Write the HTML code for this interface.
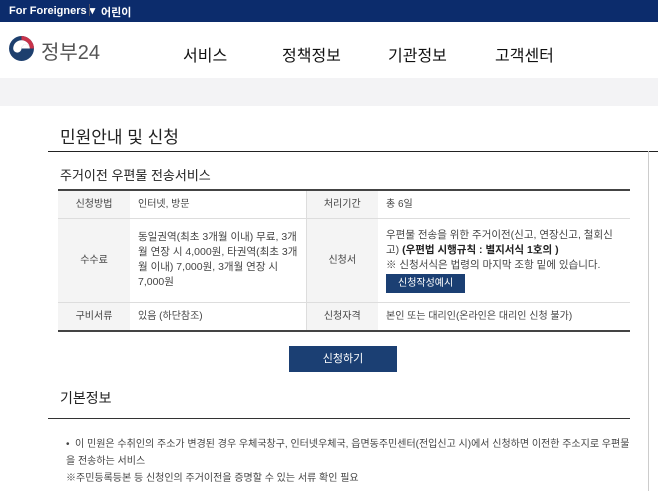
<!DOCTYPE html>
<html><head><meta charset="utf-8"><style>
*{margin:0;padding:0;box-sizing:border-box}
body{width:658px;height:491px;overflow:hidden;background:#fff;font-family:"Liberation Sans","Noto Sans CJK KR",sans-serif;color:#222;position:relative}
.a{position:absolute;white-space:nowrap}
.top{position:absolute;left:0;top:0;width:658px;height:22px;background:#0c2c6c;color:#fff;font-size:11px;font-weight:bold}
.hdr{position:absolute;left:0;top:22px;width:658px;height:56px;background:#fff;box-shadow:0 2px 3px rgba(0,0,0,.15)}
.band{position:absolute;left:0;top:78px;width:658px;height:28px;background:#f3f3f5}
.nav{font-size:16px;color:#111}
table{position:absolute;left:58px;top:189px;width:572px;table-layout:fixed;border-collapse:collapse;border-top:2px solid #444;border-bottom:2px solid #444;font-size:10px;color:#444}
td{border-bottom:1px solid #ddd;padding:3px 8px;vertical-align:middle;line-height:15px;white-space:normal}
td.l{background:#f4f4f4;text-align:center}
.btn{background:#1b3f73;color:#fff}
</style></head><body>
<div class="top"><span class="a" style="left:9px;top:4px">For Foreigners ▾</span><span class="a" style="left:89px;top:4px;width:1px;height:12px;background:#556"></span><span class="a" style="left:101px;top:4px">어린이</span></div>
<div class="hdr">
<svg class="a" style="left:8px;top:13px" width="27" height="27" viewBox="0 0 26 26">
<circle cx="13" cy="13" r="12" fill="#1d3f6e"/>
<path d="M13 1A12 12 0 0 1 25 13L21 13A8 8 0 0 0 13 5Z" fill="#c8334a"/>
<path d="M21 13A8 8 0 0 0 5 13A4 4 0 0 0 13 13A4 4 0 0 1 21 13Z" fill="#fff"/>
<path d="M21 13A4 4 0 0 0 13 13" fill="#fff"/>
</svg>
<span class="a" style="left:41px;top:14px;font-size:20px;color:#555">정부24</span>
<span class="a nav" style="left:183px;top:20px">서비스</span>
<span class="a nav" style="left:282px;top:20px">정책정보</span>
<span class="a nav" style="left:388px;top:20px">기관정보</span>
<span class="a nav" style="left:495px;top:20px">고객센터</span>
</div>
<div class="band"></div>
<div class="a" style="left:60px;top:123px;font-size:17px;color:#222">민원안내 및 신청</div>
<div class="a" style="left:48px;top:151px;width:610px;height:1px;background:#222"></div>
<div class="a" style="left:648px;top:151px;width:1px;height:340px;background:#ccc"></div>
<div class="a" style="left:60px;top:165px;font-size:13px">주거이전 우편물 전송서비스</div>
<table>
<colgroup><col style="width:72px"><col style="width:176px"><col style="width:72px"><col style="width:252px"></colgroup>
<tr style="height:28px"><td class="l">신청방법</td><td style="border-right:1px solid #ddd">인터넷, 방문</td><td class="l">처리기간</td><td>총 6일</td></tr>
<tr style="height:84px"><td class="l">수수료</td><td style="border-right:1px solid #ddd;font-size:10.5px">동일권역(최초 3개월 이내) 무료, 3개월 연장 시 4,000원, 타권역(최초 3개월 이내) 7,000원, 3개월 연장 시 7,000원</td><td class="l">신청서</td><td style="font-size:10.5px">우편물 전송을 위한 주거이전(신고, 연장신고, 철회신고) <b style="color:#222">(우편법 시행규칙 : 별지서식 1호의 )</b><br>※ 신청서식은 법령의 마지막 조항 밑에 있습니다.<br><span class="btn" style="display:inline-block;padding:2px 12px;margin-top:1px;font-size:10px">신청작성예시</span></td></tr>
<tr style="height:29px"><td class="l">구비서류</td><td style="border-right:1px solid #ddd">있음 (하단참조)</td><td class="l">신청자격</td><td>본인 또는 대리인(온라인은 대리인 신청 불가)</td></tr>
</table>
<div class="a btn" style="left:289px;top:346px;width:108px;height:26px;font-size:11px;text-align:center;line-height:26px">신청하기</div>
<div class="a" style="left:60px;top:388px;font-size:14px">기본정보</div>
<div class="a" style="left:48px;top:418px;width:582px;height:1px;background:#333"></div>
<div class="a" style="left:66px;top:436px;font-size:10px;color:#444;line-height:17px">•&nbsp;&nbsp;이 민원은 수취인의 주소가 변경된 경우 우체국창구, 인터넷우체국, 읍면동주민센터(전입신고 시)에서 신청하면 이전한 주소지로 우편물<br>을 전송하는 서비스<br>※주민등록등본 등 신청인의 주거이전을 증명할 수 있는 서류 확인 필요</div>
</body></html>
